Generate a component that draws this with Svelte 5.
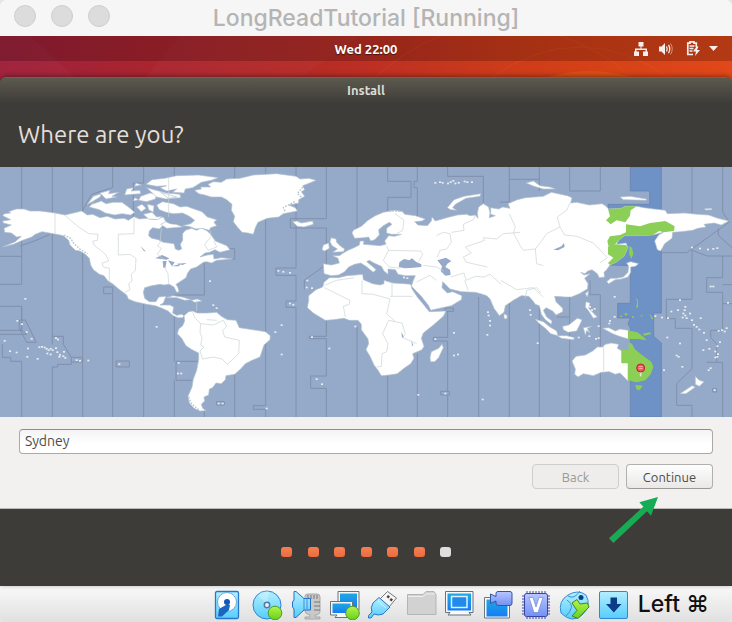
<script>
  let city = $state('Sydney');
  const steps = [1, 2, 3, 4, 5, 6, 7];
  const activeSteps = 6;

  // Map geometry uses one grid of 2196 x 750 units for the whole world.
  // Each meridian is a list of top/bottom runs; the gaps follow zone borders.
  const meridians = [
    [65, [0, 352], [418, 490], [583, 750]],
    [157, [0, 532], [600, 750]],
    [248, [0, 135], [240, 750]],
    [338, [0, 62], [360, 750]],
    [431, [0, 48], [412, 750]],
    [523, [0, 30], [440, 583], [640, 750]],
    [613, [277, 384], [730, 750]],
    [704, [0, 34], [600, 750]],
    [797, [0, 716], [727, 750]],
    [888, [0, 303], [325, 402], [421, 750]],
    [979, [0, 155], [183, 292], [460, 508], [515, 627], [664, 750]],
    [1071, [0, 190], [480, 750]],
    [1163, [0, 43], [91, 134], [620, 750]],
    [1252, [0, 43], [62, 150], [560, 750]],
    [1343, [0, 28], [434, 511], [522, 673], [684, 750]],
    [1436, [390, 750]],
    [1528, [0, 105], [400, 750]],
    [1618, [0, 72], [420, 750]],
    [1709, [0, 72], [390, 750]],
    [1801, [0, 72], [383, 750]],
    [2076, [0, 165], [244, 397], [484, 605], [715, 750]],
    [2168, [0, 135], [267, 332], [376, 490], [586, 750]]
  ];
  const runs = ([x, ...parts]) => parts.map(([a, b]) => `M${x} ${a}V${b}`).join('');
  const jogs = [
    'M0 268H65M0 352H65M0 418H65V490H0M0 502H80L58 484V459H76L109 526H80L58 484',
    'M7 532V571H32V583H65M157 508H190V532L214 571V592H173V600H157M214 571H248V585H214',
    'M348 582H388V600H348ZM592 583H528V640H575M311 360H338M311 360V380H335M400 155V48H431M523 384H613M662 245H704V277H662M60 237Q100 225 150 202M245 135L275 82L338 62',
    'M979 155H871V183H979M888 303H828V325H888M913 367V340L975 295M888 402H858V421H888M979 508H928V515H979M979 627H932V664H979M797 716H760V727H797M650 704H673V714H650Z',
    'M1163 43H1233V91H1163M1343 28H1450V110M1252 43H1242V62H1252M1322 673H1348V684H1322ZM1343 511H1300V522H1343M1335 423H1360V433H1335Z',
    'M1528 37H1618M1709 72H1801M1500 105H1528M1770 365V340M1709 450H1670M1770 365V383H1801',
    'M1984 257H2060L2188 165L2168 135M2076 250L2122 267H2196M2155 185V205L2196 242M2168 332H2120V376H2168M2168 353H2196M2168 410H2196M1999 397H2076M1999 397V455H2026V484H2076M2030 715V650L2076 605M2030 715H2076M2168 490H2132V512L2150 530V586H2120M2150 586H2168M2138 665H2150V675H2138Z'
  ];

  const americas = [
    'M8 146L14 140L32 138L26 134L48 126L72 126L90 132L120 132L165 138L195 144L220 138L245 132L262 144L278 142L300 152L322 148L345 156L372 154L385 160L402 149L418 156L442 154L462 158L490 150L498 165L488 176L478 186L458 182L448 192L446 206L455 214L475 218L490 226L522 230L526 246L536 250L545 246L541 232L548 220L548 200L556 190L575 184L590 190L604 182L622 192L632 202L646 222L680 236L690 248L660 256L645 248L628 256L615 258L600 270L622 264L640 262L642 276L665 272L698 276L650 280L635 288L620 284L610 286L590 300L572 306L563 318L558 332L540 344L528 352L534 362L537 374L530 376L522 360L508 352L492 354L480 352L455 356L434 362L430 376L434 394L448 404L468 404L476 390L498 388L490 408L480 414L510 414L521 420L518 438L530 445L545 442L552 446L548 452L534 452L520 446L504 432L486 424L466 416L440 412L405 404L385 396L380 384L356 366L340 352L324 342L312 326L298 322L280 308L272 294L268 274L256 262L240 252L226 250L210 234L206 220L190 206L170 202L148 198L126 194L106 202L95 210L68 220L40 232L8 240L46 224L64 208L50 210L34 198L14 196L12 184L34 174L10 168L8 162L32 158Z',
    'M552 446L566 434L578 432L592 438L622 438L650 436L664 448L682 458L708 460L718 482L744 486L770 490L796 494L811 506L810 518L792 534L786 552L780 570L756 580L736 590L724 604L704 622L678 626L676 638L664 650L648 648L638 662L628 666L626 684L612 690L614 702L604 712L608 724L618 731L600 732L582 724L568 708L564 688L576 660L580 636L590 610L596 578L596 558L576 548L558 536L545 514L532 500L536 486L548 476L554 462Z',
    'M584 70L604 66L602 60L632 60L624 52L640 44L664 46L680 36L720 34L760 24L830 20L888 28L900 36L926 34L948 40L924 50L908 56L914 68L904 74L914 88L896 98L896 108L866 114L886 122L892 132L850 140L836 150L802 154L788 160L774 166L766 182L760 202L744 198L726 196L712 180L700 164L704 148L694 130L696 112L680 98L664 90L634 90L614 84L596 80Z',
    'M438 52L456 38L494 34L530 26L596 24L655 32L634 40L604 46L588 56L578 62L556 66L552 78L518 76L530 66L500 72L480 62L500 56L470 58Z',
    'M268 120L282 104L276 112L304 102L318 110L340 106L366 106L388 122L404 136L392 144L366 140L344 144L316 138L298 128Z',
    'M262 112L280 88L304 80L300 90L280 102Z', 'M300 78L330 70L326 80L356 76L336 88L350 90L318 96Z',
    'M380 66L400 62L394 72L420 70L422 80L396 82L374 84Z', 'M408 48L424 54L404 58Z',
    'M422 88L450 78L470 82L466 96L440 104L416 100Z', 'M404 92L416 98L400 102Z',
    'M440 62L468 70L500 78L540 82L542 92L498 96L470 90Z', 'M482 76L530 90L506 94Z',
    'M470 114L488 104L520 110L540 120L560 118L576 124L606 134L622 150L650 158L642 166L650 176L632 182L628 190L606 184L588 186L566 178L548 176L572 170L584 160L568 148L548 138L520 140L498 136L478 128Z',
    'M410 120L426 112L438 124L424 134Z', 'M442 112L462 116L460 136L446 128Z',
    'M430 142L456 136L470 150L486 148L474 158L446 156Z', 'M482 172L498 164L510 170L528 172L548 180L522 182L500 184Z',
    'M498 392L520 386L546 390L574 398L554 400L530 392Z', 'M574 400L592 396L606 402L584 406Z'
  ];
  const greyLines = [
    'M165 138V200M195 144L212 160L236 180L266 200L294 202L292 220L278 222L282 234L300 248L318 264L326 282L306 288L310 300L328 304V346M402 154V200L355 202V264L390 262L408 274L406 310L394 322L396 342L386 350L390 368L374 376',
    'M484 184L480 228L472 236L484 244L472 262L490 276M494 300L504 320L506 350M630 190L634 208L614 232L624 250L650 240L642 222M506 30L506 150',
    'M590 400V432M578 434L584 452L602 470L600 496L606 512L602 534L612 540L600 552L608 576L640 570L666 576L682 592L716 560L718 520L674 510L668 490L680 478L670 460L640 474L602 470M620 458L650 460',
    'M973 355L1010 340L1062 332M973 362L1050 400L1048 412L1030 418L1036 450M1086 340L1086 380L1120 382L1170 396L1160 440L1186 464L1206 468L1216 500L1208 512L1250 530M1170 388H1238M1186 464L1166 460L1148 500L1164 530L1160 554L1146 560L1144 598L1130 600M1176 345V388',
    'M1160 237L1166 250L1150 280L1168 300L1200 304M1166 250L1262 252L1268 262L1256 284M1185 140L1212 160L1208 190L1190 200M1310 205L1330 196L1350 200L1354 226L1340 246L1320 250L1312 270M1354 196L1392 190L1390 172L1420 158L1426 146M1396 240L1454 220L1450 212L1490 216L1510 200L1560 196M1396 240L1414 258L1390 270L1398 285L1426 292L1462 300M1270 295L1310 300L1332 312M1250 345L1290 325L1310 340',
    'M1352 330L1392 318L1398 340L1426 328L1452 330L1470 322L1504 352M1394 340L1404 370M1502 340L1550 368L1600 362L1630 390M1528 140L1546 180L1540 198L1560 235L1570 250L1606 246L1620 228L1640 200L1680 180L1672 150L1700 130L1710 108M1680 180L1694 204L1730 208L1780 228L1822 272L1800 288M1606 246L1610 290L1630 296M1575 395L1580 370L1610 362L1622 378'
  ];
  const oldWorld = [
    'M970 290L994 294L1018 288L1014 274L998 266L1018 266L1030 258L1044 250L1062 242L1078 234L1080 222L1092 222L1090 232L1116 234L1140 236L1158 232L1154 222L1166 206L1184 208L1204 202L1174 202L1160 198L1160 184L1176 172L1168 166L1150 176L1136 188L1138 204L1124 218L1112 222L1106 210L1092 212L1064 214L1056 198L1060 190L1084 178L1104 160L1126 146L1150 136L1184 130L1208 134L1214 142L1246 146L1276 156L1266 162L1244 164L1254 174L1282 176L1294 162L1296 150L1306 162L1340 152L1372 144L1400 142L1410 146L1426 144L1434 154L1432 138L1436 120L1450 110L1466 120L1470 138L1468 152L1486 146L1472 142L1472 122L1496 126L1508 120L1530 124L1524 110L1552 98L1576 92L1630 88L1654 76L1702 86L1716 92L1712 108L1730 106L1768 114L1806 110L1816 116L1826 126L1864 124L1876 118L1910 118L1932 122L1962 126L1996 130L2002 140L2054 138L2092 142L2126 144L2154 154L2186 162L2164 174L2142 168L2112 172L2118 180L2094 184L2078 190L2042 194L2018 196L2016 214L1994 230L1982 252L1972 248L1964 222L1976 204L1990 196L1958 204L1920 206L1874 206L1856 220L1850 232L1878 228L1884 242L1872 268L1848 286L1830 294L1820 308L1812 316L1814 330L1798 332L1792 320L1776 308L1764 312L1754 320L1742 316L1752 324L1770 320L1754 334L1764 350L1762 366L1738 380L1714 390L1696 390L1664 388L1668 404L1688 424L1688 434L1668 444L1658 432L1638 422L1630 430L1640 450L1656 462L1654 472L1636 458L1624 442L1618 416L1606 412L1596 398L1586 388L1564 386L1540 400L1516 416L1512 436L1498 446L1482 424L1470 396L1460 386L1442 380L1426 376L1384 374L1350 366L1328 344L1326 362L1342 378L1358 374L1386 386L1384 398L1354 416L1292 430L1286 416L1264 388L1234 358L1240 340L1246 326L1216 326L1194 322L1186 308L1164 306L1164 322L1152 312L1144 298L1122 288L1108 280L1100 284L1122 302L1128 308L1120 316L1098 298L1082 288L1064 292L1046 300L1034 314L1016 324L994 326L972 320Z',
    'M988 332L1016 332L1040 326L1068 324L1088 322L1090 338L1118 350L1140 354L1152 350L1152 340L1178 348L1212 350L1232 352L1236 366L1252 390L1270 412L1288 434L1338 432L1330 448L1300 474L1270 498L1264 514L1272 538L1266 548L1238 560L1242 574L1232 590L1212 604L1192 620L1168 624L1144 626L1134 610L1122 594L1110 568L1098 548L1106 530L1104 516L1084 488L1084 472L1074 460L1048 460L1032 454L1000 458L976 460L956 448L940 438L922 422L926 400L926 386L948 368L968 360L972 346Z',
    'M1290 572L1294 554L1316 544L1326 532L1330 542L1316 572L1304 584L1292 584Z',
    'M998 256L1012 246L996 236L990 224L994 212L1008 216L1010 226L1022 238L1034 246L1030 254Z',
    'M966 248L970 234L986 228L988 244L974 252Z', 'M878 164L890 162L904 168L938 162L940 172L912 180L892 178Z',
    'M1342 122L1362 98L1392 88L1442 80L1440 88L1398 94L1366 112L1358 122L1370 130L1352 128Z',
    'M1578 48L1600 42L1620 56L1650 60L1666 66L1630 66L1602 58Z', 'M1860 90L1890 88L1940 96L1938 100L1870 98Z', 'M2114 125L2134 124L2136 128L2116 129Z',
    'M1820 344L1832 334L1850 334L1870 330L1884 316L1886 298L1880 288L1892 284L1916 290L1906 298L1892 300L1892 316L1884 330L1864 336L1846 338L1826 350Z',
    'M1756 380L1766 372L1762 390Z', 'M1758 404L1770 408L1766 424L1782 440L1792 450L1780 454L1766 432L1756 420Z',
    'M1606 457L1630 464L1650 480L1670 492L1674 506L1652 500L1636 484L1616 468Z', 'M1672 506L1700 506L1724 512L1720 518L1684 514Z',
    'M1688 478L1706 474L1732 454L1746 458L1740 472L1730 492L1704 496L1690 488Z', 'M1750 482L1776 478L1762 484L1770 498L1760 490L1756 504Z',
    'M1808 484L1826 482L1846 492L1860 486L1885 490V516L1858 508L1838 500Z',
    'M1512 440L1522 446L1520 456L1512 454Z',
    'M1716 582L1728 568L1756 564L1778 552L1792 540L1808 540L1816 532L1834 528L1856 532L1852 544L1866 552V588H1884V642L1872 630L1860 618L1846 622L1828 614L1804 616L1780 626L1750 620L1734 630L1724 622L1726 606Z',
    'M2086 628L2098 640L2112 644L2098 658L2086 652Z', 'M2040 680L2076 656L2086 660L2058 680Z'
  ];
  const water = [
    'M1196 300L1198 286L1212 276L1228 280L1236 274L1248 284L1264 292L1264 300L1240 302L1214 304Z',
    'M1312 280L1338 272L1354 282L1342 290L1336 300L1350 308L1352 324L1336 326L1322 312L1326 298Z',
    'M1660 248L1684 238L1692 228L1694 240L1674 250Z', 'M466 274L486 264L508 274L500 278Z',
    'M488 282H500L496 302H490ZM504 280L524 286L516 298ZM516 298L542 290L536 298ZM530 290L560 288L548 294Z', 'M420 236L434 250L438 256L430 250Z',
    'M500 162L520 150L550 160L548 168L520 172Z',
    'M1204 495L1212 510L1206 512ZM1234 518L1240 536H1236Z',
    'M1234 354L1258 388L1290 428L1280 416L1256 394Z'
  ];
  const green = [
    'M1824 126L1864 124L1876 118L1910 118L1892 130L1890 146L1876 166L1850 160L1832 172L1818 160L1830 148Z',
    'M1878 172L1920 178L1950 168L1980 164L1996 162L2024 178L2022 192L1990 196L1978 192L1958 204L1920 206L1874 206L1856 220L1846 232L1826 240L1822 222L1830 208L1860 204L1878 196Z',
    'M1824 240L1840 232L1878 234L1884 242L1872 268L1848 286L1830 294L1824 288L1840 272L1824 262Z',
    'M1888 236L1896 242L1900 260L1894 276L1888 262Z',
    'M1884 490L1912 496L1928 508L1940 520L1916 516L1884 516Z', 'M1928 500L1950 496L1954 500L1934 506Z',
    'M1864 550L1886 548V526L1896 530L1904 546L1926 564L1954 584L1960 600L1952 622L1936 640L1910 646L1884 640V588H1864Z',
    'M1906 654L1928 656L1920 668H1910Z', 'M1906 392L1914 400L1914 420L1908 424L1912 404Z',
    'M1860 446H1866V450H1860ZM1874 439H1882V445H1874ZM1896 448H1902V452H1896ZM1918 448L1928 444V448ZM1948 440L1960 454L1956 458Z'
  ];
  const islands = [
    [76, 396], [52, 462], [66, 472], [80, 496], [95, 516], [14, 522], [30, 553], [50, 557], [84, 545], [82, 570], [113, 576], [118, 541], [126, 540], [134, 542], [140, 546], [146, 550], [152, 546], [158, 550], [142, 560], [152, 563], [168, 544], [172, 556], [180, 564], [190, 568], [178, 570], [196, 573], [192, 555], [168, 514], [174, 518], [230, 580], [240, 582], [265, 581], [358, 592], [536, 588], [534, 620], [544, 620], [630, 343], [470, 480], [640, 415], [650, 424], [656, 710], [668, 710],
    [835, 312], [850, 315], [870, 318], [922, 341], [920, 362], [936, 364], [870, 410], [880, 414], [845, 475], [826, 496], [845, 563], [936, 511], [988, 545], [950, 637], [966, 652], [1066, 479], [1362, 498], [1362, 566], [1374, 563], [1306, 517], [1336, 680], [1255, 684], [1448, 698], [800, 725], [1306, 48], [1320, 46], [1328, 48], [1344, 50], [1352, 46], [1360, 42], [1366, 50], [1376, 48], [1394, 44], [1402, 46], [1416, 46], [1212, 332], [1222, 334],
    [1464, 436], [1466, 446], [1470, 462], [1470, 476], [1462, 504], [1590, 430], [1592, 444], [1613, 529], [1768, 508], [1788, 516], [1796, 514], [1736, 512], [1796, 478], [1830, 462], [1828, 470], [1844, 450], [1844, 390], [1770, 420], [1776, 430], [1784, 426], [1966, 448], [1986, 452], [2004, 454], [2014, 434], [2034, 430], [2050, 440], [2056, 446], [2048, 452], [2060, 454], [2054, 430], [2070, 440], [2040, 400], [2056, 420], [2076, 460], [2082, 474], [2090, 480], [2098, 488], [2102, 454], [2076, 242], [2100, 245], [2124, 248], [2140, 246], [2152, 244], [2132, 359], [2140, 359], [2184, 408], [2120, 520], [2156, 492], [2166, 490], [2174, 494], [2160, 526], [2110, 550], [2128, 546], [2146, 554], [2154, 562], [2146, 572], [2152, 570], [2152, 538], [2132, 604], [2126, 610], [2030, 566], [2036, 570], [1992, 610], [2047, 600], [2144, 670], [2002, 512], [2040, 530], [2112, 498], [2180, 484]
  ];
</script>

<div class="vm">
  <header class="titlebar">
    <div class="lights"><i></i><i></i><i></i></div>
    <h1>LongReadTutorial [Running]</h1>
  </header>

  <div class="desktop">
    <svg class="arcs" viewBox="0 0 732 42" preserveAspectRatio="none" aria-hidden="true">
      <path d="M0 0H30L76 42H0Z" fill="#fff" opacity=".025" />
      <path d="M180 0L145 42H300L360 0Z" fill="#fff" opacity=".02" />
      <g fill="none" stroke="#f57a3a" opacity=".15"><path d="M375 42Q405 14 440 0" /><path d="M490 42Q580 -20 670 42" /><path d="M560 0Q600 12 632 42" /></g>
      <path d="M545 42Q590 28 635 42Z" fill="#e06a14" opacity=".4" />
    </svg>
    <div class="topbar">
      <span class="clock">Wed 22:00</span>
      <div class="tray">
        <svg width="14" height="14" viewBox="0 0 14 14" fill="#f4efec"><path d="M4.500 0h5v4.500h-2v2H13v3h1V14H9V9.500h2.500V8h-9v1.500H5V14H0V9.500h1v-3h5.500v-2h-2z" /></svg>
        <svg width="14" height="14" viewBox="0 0 14 14" fill="none" stroke="#f4efec"><path d="M0 4.500h2.500L6 1v12L2.500 9.500H0z" fill="#f4efec" stroke="none" /><path d="M7.500 4.500Q9 7 7.500 9.500M9.500 2.800Q12 7 9.500 11.200" stroke-width="1.300" /><path d="M11.500 1.500Q15 7 11.500 12.500" opacity=".5" /></svg>
        <svg width="14" height="15" viewBox="0 0 14 15" fill="none" stroke="#f4efec"><path d="M7 13.500H1.800V2.200H4V.8h4v1.400h2.300V6" stroke-width="1.700" /><path d="M3.500 5h5M3.500 7.500h4M3.500 10h3" stroke-width="1.400" /><path d="M10.500 5.500L7 10.500h3L9 15l5-6h-3l1.500-3.500z" fill="#f4efec" stroke="none" /></svg>
        <svg width="9" height="5" viewBox="0 0 9 5"><path d="M0 0h9L4.500 5z" fill="#f4efec" /></svg>
      </div>
    </div>

    <main class="installer">
      <div class="wintitle">Install</div>
      <h2>Where are you?</h2>

      <svg class="map" viewBox="0 0 2196 750" role="img" aria-label="Time zone map">
        <rect width="2196" height="750" fill="#95a9c9" />
        <path d="M1891 0H1984V257L1984 438H1961V508L1984 528V750H1891V484L1884 470L1891 453H1853V409H1891V296L1830 294L1824 112H1949V72H1891Z" fill="#6e91c6" stroke="#6680ae" stroke-width="2" />
        <g fill="none" stroke="#8090ac" stroke-width="3">
          {#each meridians as m}<path d={runs(m)} />{/each}
          {#each jogs as d}<path {d} />{/each}
        </g>
        <g fill="#fff" stroke="#b2c1cb" stroke-width="2" stroke-linejoin="round">
          {#each americas as d}<path {d} />{/each}
          {#each oldWorld as d}<path {d} />{/each}
        </g>
        <g fill="#95a9c9">{#each water as d}<path {d} />{/each}</g>
        <g fill="none" stroke="#c9d1d1" stroke-width="2">{#each greyLines as d}<path {d} />{/each}<path d="M1811 535V612" /></g>
        <g fill="#e9eef3">{#each islands as [x, y]}<rect x={x - 3} y={y - 3} width="6" height="5" />{/each}</g>
        <g fill="none" stroke="#b4c5cc" stroke-width="4" stroke-dasharray="5 4"><path d="M192 204L212 214L222 230L240 246L262 260" /><path d="M566 690L574 710L596 728" /><path d="M908 60L892 80L904 90M884 104L850 122L856 134" /><path d="M1168 132L1206 132" /></g>
        <g fill="#8ccf57">{#each green as d}<path {d} />{/each}</g>
        <path d="M1922 608V628" stroke="#dfe5d8" stroke-width="5" />
        <circle cx="1922" cy="603" r="12" fill="#ef5557" stroke="#bb2429" stroke-width="3" />
        <path d="M1916 599H1928M1916 605H1928" stroke="#ffb5ae" stroke-width="3" />
      </svg>

      <form class="panel" onsubmit={(e) => e.preventDefault()}>
        <input type="text" aria-label="Location" bind:value={city} />
        <div class="actions">
          <button type="button" disabled>Back</button>
          <button type="submit">Continue</button>
        </div>
        <svg class="arrow" width="49" height="46" viewBox="0 0 147 138" aria-hidden="true"><path d="M0 124L103 29L91 16L147 0L126 56L114 43L13 138Z" fill="#17ac53" /></svg>
      </form>

      <div class="steps">
        <div class="dots">{#each steps as n}<i class:done={n <= activeSteps}></i>{/each}</div>
      </div>
    </main>
  </div>

  <footer class="status">
    <div class="devices">
      <svg viewBox="0 0 32 32"><defs>
          <linearGradient id="sky" x2="0" y2="1"><stop stop-color="#b5efff" /><stop offset="1" stop-color="#55cdfc" /></linearGradient>
          <linearGradient id="blue" x2="0" y2="1"><stop stop-color="#20a8e0" /><stop offset="1" stop-color="#147cf5" /></linearGradient>
          <linearGradient id="lime" x2="0" y2="1"><stop stop-color="#b4f54c" /><stop offset="1" stop-color="#68cf1c" /></linearGradient>
          <linearGradient id="violet" x2="0" y2="1"><stop stop-color="#b9c6ff" /><stop offset="1" stop-color="#7290f3" /></linearGradient>
        </defs>
        <rect x="2.500" y="3.500" width="23" height="27" rx="1.500" fill="url(#sky)" stroke="#2877c9" stroke-width="1.300" /><circle cx="14" cy="14" r="9.500" fill="#fff" stroke="#6caadc" /><path d="M14.500 16L6 21L5 28.500H9L16 22L17 17Z" fill="#1b65c0" /><circle cx="14" cy="14" r="3" fill="#1158b6" /></svg>
      <svg viewBox="0 0 32 32"><circle cx="16" cy="17" r="14" fill="url(#sky)" stroke="#3182d6" /><path d="M16 17L7 7A14 14 0 0 1 18 3Z" fill="#fff" opacity=".25" /><circle cx="16" cy="17" r="2.700" fill="#e7f2f9" stroke="#527b9f" stroke-width="1.500" /><circle cx="24" cy="25" r="6.800" fill="url(#lime)" stroke="#4e9c2b" /></svg>
      <svg viewBox="0 0 32 32"><path d="M15 8Q15 6 18 6H27Q30 6 30 9V23Q30 27 25 27V29H30V31H15V29H20V27Q15 26 15 23Z" fill="#c9c9c9" stroke="#a7a7a7" /><path d="M18 7V11M21 7V11M24 7V11M27 7V11M24 14H30M24 18H30M24 22H30" stroke="#777" /><path d="M4 3.500H6L14 10.500H20.500V22H14L6 29.500H4V21L2.500 19V14L4 12Z" fill="url(#sky)" stroke="#2471cd" /><path d="M14 10.500V22M17 10.500V22" stroke="#438ddf" /></svg>
      <svg viewBox="0 0 32 32"><path d="M10 3.500H31V22H26L28 25H16L18 22H10Z" fill="#f4f6f7" stroke="#717171" /><rect x="12" y="5.500" width="17" height="14" fill="url(#blue)" /><path d="M2.500 13.500H24.500V27H20L22 29.500H7L9 27H2.500Z" fill="#f7f7f7" stroke="#717171" /><rect x="4.500" y="15.500" width="18" height="9.500" fill="url(#blue)" /><circle cx="24.500" cy="25" r="6.800" fill="url(#lime)" stroke="#4e9c2b" /></svg>
      <svg viewBox="0 0 32 32"><path d="M21.500 3.500L30.500 10L23 19L14 11Z" fill="#f6f6f6" stroke="#777" /><path d="M22 7L24 8.500L22.500 10.500L20.500 9ZM25 10L27 11.500L25.500 13.500L23.500 12Z" fill="#444" /><path d="M13 9.500L24 19L17 26Q12 28 8 26L5 30H2.500V27.500L6 24Q4 20 7 15Z" fill="url(#sky)" stroke="#2e77c6" /><path d="M12 13L20 20" stroke="#e7fbff" opacity=".8" /></svg>
      <svg viewBox="0 0 32 32"><path d="M2.500 6.500H18L21 3.500H29L31 6.500V26.500H2.500Z" fill="#d2d2d2" stroke="#b4b4b4" /><path d="M3 8.500H18L21 6H30" fill="none" stroke="#eee" /></svg>
      <svg viewBox="0 0 32 32"><path d="M2.500 3.500H30V24.500H26L28 27H5L7 24.500H2.500Z" fill="#f9f9f9" stroke="#69717a" /><rect x="4.500" y="5.500" width="23.500" height="17" fill="url(#blue)" /><rect x="8.500" y="8.500" width="15.500" height="11" fill="#228aed" stroke="#d8f3ff" stroke-width="1.500" /></svg>
      <svg viewBox="0 0 32 32"><path d="M2.500 9.500H27.500V30H2.500Z" fill="#fafafa" stroke="#6f767c" /><rect x="4.500" y="11.500" width="21" height="17" fill="url(#blue)" /><path d="M8.500 6L14 8.500V5.500Q14 3.500 16 3.500H28Q30 3.500 30 5.500V15Q30 17.500 28 17.500H16Q14 17.500 14 15V13L8.500 15.500Z" fill="url(#violet)" stroke="#3155a8" /></svg>
      <svg viewBox="0 0 32 32"><path d="M7 3V31M10 3V31M13 3V31M16 3V31M19 3V31M22 3V31M25 3V31M2 8H30M2 11H30M2 14H30M2 17H30M2 20H30M2 23H30M2 26H30" stroke="#3c46a5" /><rect x="4.500" y="5.500" width="23" height="23" rx="2" fill="url(#violet)" stroke="#3945a5" /><path d="M9 9.500H13L16 19L19 9.500H23L18 24.500H14Z" fill="#fff" stroke="#647bd1" stroke-width=".6" /></svg>
      <svg viewBox="0 0 32 32"><path d="M3 25Q0 13 10 7T28 7Q34 18 24 27T3 25Z" fill="url(#sky)" stroke="#388cd2" /><path d="M10 8Q16 12 22 3M9 12Q19 18 7 29" fill="none" stroke="#3e90cf" /><circle cx="23" cy="9.500" r="2.500" fill="#074183" /><path d="M14 15L19 11.500L22 16L29.500 15L31 19L20 30.500L14 28L19 22.500Z" fill="url(#lime)" stroke="#45861b" /></svg>
      <svg viewBox="0 0 32 32"><rect x="2.500" y="3.500" width="28" height="27" rx="1.500" fill="url(#sky)" stroke="#3586ce" /><path d="M13.500 9.500H20V16H24.500L16.800 24.500L9 16H13.500Z" fill="#0b3c88" /></svg>
    </div>
    <span class="hostkey">Left ⌘</span>
  </footer>
</div>

<style>
  :global(body) { margin: 0; background: #e5e5e5; }
  .vm { font-family: Ubuntu, "Noto Sans", sans-serif; font-size: 13px; color: #4b4b49; overflow: hidden; border-radius: 6px; }
  .titlebar { position: relative; display: flex; align-items: center; justify-content: center; height: 36px; background: #f6f6f6; }
  .lights { position: absolute; left: 14px; top: 5px; display: flex; gap: 15px; }
  .lights i { box-sizing: border-box; width: 22px; height: 22px; border-radius: 50%; background: #dcdcdc; border: 1px solid #cdcdcd; }
  h1 { margin: 0; font: 500 23px/34px Inter, sans-serif; color: #b4b4b4; }
  .desktop { position: relative; background: linear-gradient(90deg, #9f1f3a 0%, #b82c25 45%, #d23f18 75%, #e1481a 100%); }
  .arcs { position: absolute; inset: 0 0 auto; width: 100%; height: 42px; }
  .topbar { position: relative; display: flex; justify-content: center; align-items: center; height: 25px; margin-bottom: 16px; background: rgba(0, 0, 0, .2); color: #fff; }
  .clock { font-weight: 700; text-shadow: 0 1px 1px #0008; }
  .tray { position: absolute; right: 14px; top: 0; height: 25px; display: flex; align-items: center; gap: 11px; }
  .tray svg:nth-child(3) { margin-left: 2px; margin-right: -2px; }
  .installer { position: relative; background: #3e3c38; border-radius: 6px 6px 0 0; box-shadow: 0 -1px 5px #0006; }
  .wintitle { box-sizing: border-box; height: 26px; border-radius: 6px 6px 0 0; background: linear-gradient(#5c594f, #3f3d38); border-top: 1px solid #69655a; text-align: center; font-weight: 700; line-height: 25px; color: #dfdbd2; }
  h2 { margin: 0; padding: 0 18px; font-size: 24px; font-weight: 400; line-height: 64px; color: #e3dfd8; }
  .map { display: block; width: 100%; height: auto; }
  .panel { position: relative; padding: 12px 19px 19px; background: #f2f1f0; border-bottom: 1px solid #bdbbb8; }
  input { box-sizing: border-box; display: block; width: 100%; height: 25px; padding: 0 5px 1px; border: 1px solid #aaa9a6; border-top-color: #8f8e8b; border-radius: 4px; background: linear-gradient(#f4f4f4, #fff 60%); font: inherit; font-size: 14px; color: #4b4b49; outline: 0; }
  .actions { display: flex; justify-content: flex-end; gap: 7px; margin-top: 10px; }
  button { box-sizing: border-box; width: 87px; height: 25px; padding: 0; border: 1px solid #b2b0ad; border-bottom-color: #9c9a96; border-radius: 4px; background: linear-gradient(#fefefe, #e9e8e7); font: inherit; color: #4b4b49; }
  button:disabled { background: #eeedec; border-color: #cfcecc; color: #9a9996; }
  .arrow { position: absolute; right: 74px; top: 80px; }
  .steps { display: flex; justify-content: center; align-items: center; height: 69px; padding-bottom: 8px; padding-top: 0; }
  .steps { padding: 8px 0 0; }
  .dots { display: flex; justify-content: space-between; width: 170px; }
  .dots i { width: 11px; height: 10px; border-radius: 3px; background: #dedede; }
  .dots .done { background: linear-gradient(#f38155, #ed6b3a); }
  .status { display: flex; justify-content: flex-end; align-items: center; gap: 9px; height: 36px; padding-right: 23px; background: linear-gradient(#f9f9f9, #e0e0e0); }
  .devices { display: flex; justify-content: space-between; width: 416px; }
  .devices svg { width: 32px; height: 32px; }
  .hostkey { font: 500 23px/36px Inter, "DejaVu Sans", sans-serif; color: #111; white-space: nowrap; }
</style>
